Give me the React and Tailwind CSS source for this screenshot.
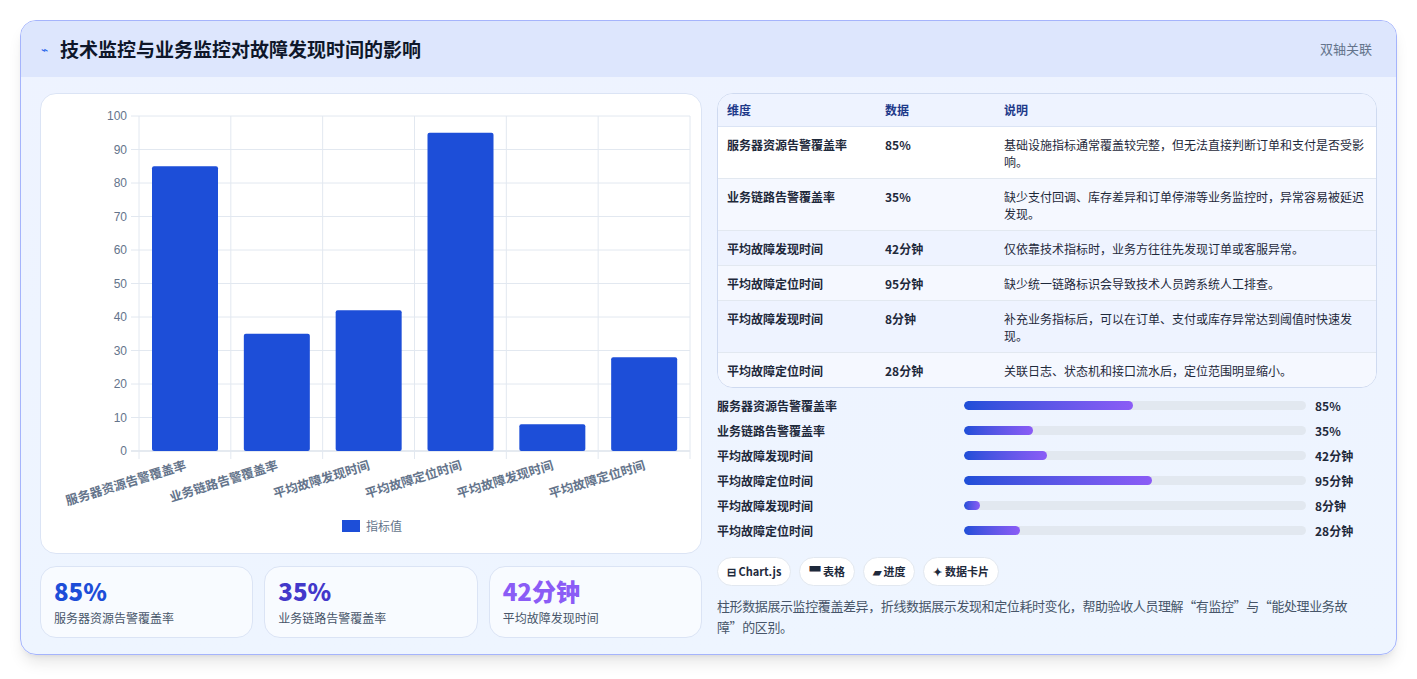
import React from 'react';

const rows = [
  { name: '服务器资源告警覆盖率', data: '85%', note: '基础设施指标通常覆盖较完整，但无法直接判断订单和支付是否受影响。', v: 85 },
  { name: '业务链路告警覆盖率', data: '35%', note: '缺少支付回调、库存差异和订单停滞等业务监控时，异常容易被延迟发现。', v: 35 },
  { name: '平均故障发现时间', data: '42分钟', note: '仅依靠技术指标时，业务方往往先发现订单或客服异常。', v: 42 },
  { name: '平均故障定位时间', data: '95分钟', note: '缺少统一链路标识会导致技术人员跨系统人工排查。', v: 95 },
  { name: '平均故障发现时间', data: '8分钟', note: '补充业务指标后，可以在订单、支付或库存异常达到阈值时快速发现。', v: 8 },
  { name: '平均故障定位时间', data: '28分钟', note: '关联日志、状态机和接口流水后，定位范围明显缩小。', v: 28 },
];

const font = { fontFamily: '"Noto Sans CJK SC", "Noto Sans", sans-serif' };

function Chart() {
  const L = 98, R = 649, T = 22, B = 357;
  const step = (R - L) / 6;
  const y = (v) => B - ((B - T) * v) / 100;
  return (
    <svg width="661" height="460" className="block">
      {[0, 10, 20, 30, 40, 50, 60, 70, 80, 90, 100].map((t) => (
        <g key={t}>
          <line x1={L - 8} x2={R} y1={y(t)} y2={y(t)} stroke={t === 0 ? '#cbd5e1' : '#e2e8f0'} />
          <text x={L - 12} y={y(t) + 4} textAnchor="end" fontSize="12" fill="#64748b" fontFamily="Liberation Sans, sans-serif">{t}</text>
        </g>
      ))}
      {Array.from({ length: 7 }).map((_, i) => (
        <line key={i} x1={L + step * i} x2={L + step * i} y1={T} y2={B + 8} stroke="#e2e8f0" />
      ))}
      {rows.map((r, i) => {
        const x = L + step * i + 13;
        return (
          <g key={i}>
            <rect x={x} y={y(r.v)} width={66} height={B - y(r.v)} rx="2" fill="#1d4ed8" />
            <text
              transform={`translate(${L + step * i + step / 2 + 2},${B + 18}) rotate(-17)`}
              textAnchor="end" fontSize="12.5" fontWeight="700" fill="#64748b"
              fontFamily='"Noto Sans CJK SC", sans-serif'
            >{r.name}</text>
          </g>
        );
      })}
      <rect x="301" y="426" width="18" height="12" fill="#1d4ed8" />
      <text x="325" y="437" fontSize="12" fill="#64748b" fontFamily='"Noto Sans CJK SC", sans-serif'>指标值</text>
    </svg>
  );
}

export default function App() {
  return (
    <div className="min-h-[679px] bg-white pt-5 px-5" style={font}>
      <div className="w-[1377px] rounded-2xl border border-[#a5b4fc] overflow-hidden bg-gradient-to-b from-[#eef3ff] to-[#eef5ff] shadow-lg">
        <div className="h-[56px] flex items-center justify-between px-5 bg-[#dde6fd]">
          <div className="flex items-center gap-3">
            <span className="text-[#2563eb] text-xs">⌁</span>
            <span className="text-[19px] font-bold text-[#0f172a]">技术监控与业务监控对故障发现时间的影响</span>
          </div>
          <span className="text-[13px] text-[#64748b] mr-1">双轴关联</span>
        </div>
        <div className="flex gap-[15px] px-[19px] pt-[16px] pb-[16px]">
          <div className="w-[662px] flex flex-col gap-3">
            <div className="h-[461px] bg-white rounded-2xl border border-[#dbe4f5]">
              <Chart />
            </div>
            <div className="grid grid-cols-3 gap-[11px]">
              {[['85%', '服务器资源告警覆盖率', 'text-[#1d4ed8]'], ['35%', '业务链路告警覆盖率', 'text-[#4338ca]'], ['42分钟', '平均故障发现时间', 'text-[#8b5cf6]']].map(([v, l, c]) => (
                <div key={l} className="h-[72px] bg-[#f8fbff] rounded-2xl border border-[#dbe4f5] px-[13px] pt-[9px]">
                  <div className={`text-[24px] font-extrabold leading-[30px] ${c}`}>{v}</div>
                  <div className="text-[12px] text-[#475569] mt-[3px]">{l}</div>
                </div>
              ))}
            </div>
          </div>
          <div className="w-[662px] flex flex-col">
            <div className="rounded-2xl border border-[#cfdaf0] overflow-hidden bg-white text-[12px]">
              <div className="flex h-[33px] items-center bg-[#eef3ff] font-bold text-[#1e3a8a] border-b border-[#dbe4f5]">
                <div className="w-[167px] pl-[9px]">维度</div>
                <div className="w-[119px]">数据</div>
                <div className="flex-1">说明</div>
              </div>
              {rows.map((r, i) => (
                <div key={i} className={`flex py-[8.5px] border-b border-[#e2e8f0] last:border-b-0 ${i === 2 || i === 4 ? 'bg-[#eef3ff]' : i % 2 ? 'bg-[#f5f8ff]' : 'bg-white'}`}>
                  <div className="w-[167px] pl-[9px] font-semibold text-[#1e293b] leading-[17px]">{r.name}</div>
                  <div className="w-[119px] font-semibold text-[#1e293b] leading-[17px]">{r.data}</div>
                  <div className="flex-1 pr-[12px] text-[#1e293b] leading-[17px]">{r.note}</div>
                </div>
              ))}
            </div>
            <div className="mt-[9px] flex flex-col gap-[8px]">
              {rows.map((r, i) => (
                <div key={i} className="flex items-center h-[17px] text-[12px] font-semibold text-[#1e293b]">
                  <div className="w-[247px]">{r.name}</div>
                  <div className="w-[342px] h-[9px] rounded-full bg-[#e2e8f0] overflow-hidden">
                    <div className="h-full rounded-full bg-gradient-to-r from-[#1d4ed8] to-[#8b5cf6]" style={{ width: `${r.v * 0.58}%` }} />
                  </div>
                  <div className="ml-[9px] font-bold">{r.data}</div>
                </div>
              ))}
            </div>
            <div className="mt-[18px] flex gap-[8px] text-[11px] font-bold text-[#1e293b]">
              {['⊟ Chart.js', '▀ 表格', '▰ 进度', '✦ 数据卡片'].map((c) => (
                <div key={c} className="h-[29px] px-[9px] flex items-center rounded-full bg-white border border-[#e2e8f0]">{c}</div>
              ))}
            </div>
            <div className="mt-[9px] text-[13px] leading-[21px] text-[#475569] tracking-[-0.4px]">
              柱形数据展示监控覆盖差异，折线数据展示发现和定位耗时变化，帮助验收人员理解“有监控”与“能处理业务故障”的区别。
            </div>
          </div>
        </div>
      </div>
    </div>
  );
}
